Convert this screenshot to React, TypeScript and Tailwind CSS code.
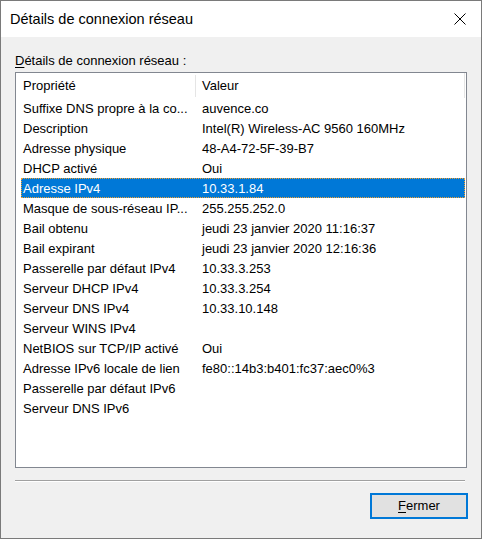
const rows: [string, string][] = [
  ["Suffixe DNS propre à la co...", "auvence.co"],
  ["Description", "Intel(R) Wireless-AC 9560 160MHz"],
  ["Adresse physique", "48-A4-72-5F-39-B7"],
  ["DHCP activé", "Oui"],
  ["Adresse IPv4", "10.33.1.84"],
  ["Masque de sous-réseau IP...", "255.255.252.0"],
  ["Bail obtenu", "jeudi 23 janvier 2020 11:16:37"],
  ["Bail expirant", "jeudi 23 janvier 2020 12:16:36"],
  ["Passerelle par défaut IPv4", "10.33.3.253"],
  ["Serveur DHCP IPv4", "10.33.3.254"],
  ["Serveur DNS IPv4", "10.33.10.148"],
  ["Serveur WINS IPv4", ""],
  ["NetBIOS sur TCP/IP activé", "Oui"],
  ["Adresse IPv6 locale de lien", "fe80::14b3:b401:fc37:aec0%3"],
  ["Passerelle par défaut IPv6", ""],
  ["Serveur DNS IPv6", ""],
];

const SELECTED = 4;

export default function App() {
  return (
    <div
      className="w-[482px] h-[539px] border border-[#7a7a7a] flex flex-col text-black"
      style={{ fontFamily: '"Liberation Sans", Arial, sans-serif' }}
    >
      {/* barre de titre */}
      <div className="h-[36px] bg-white flex items-center justify-between pl-[9px] pr-[14px]">
        <span className="text-[14.5px] leading-[22px]">Détails de connexion réseau</span>
        <svg width="12" height="12" viewBox="0 0 12 12" className="mr-[1px]">
          <path d="M0.5 0.5 L11.5 11.5 M11.5 0.5 L0.5 11.5" stroke="#000" strokeWidth="1" />
        </svg>
      </div>

      <div className="flex-1 bg-[#f0f0f0] pl-[14px] pr-[13px] flex flex-col">
        <div className="mt-[16px] h-[15px] leading-[15px] text-[13px]">
          <span className="underline underline-offset-[2px]">D</span>étails de connexion réseau :
        </div>

        {/* liste */}
        <div className="mt-[4px] h-[396px] w-[452px] border border-[#828790] bg-white flex flex-col text-[13px]">
          <div className="h-[25px] flex shrink-0">
            <div className="w-[180px] pl-[7px] leading-[26px] flex justify-between">
              <span>Propriété</span>
              <span className="w-px h-[22px] mt-[2px] bg-[#e5e5e5]" />
            </div>
            <div className="w-[269px] pl-[6px] leading-[26px] flex justify-between">
              <span>Valeur</span>
              <span className="w-px h-[25px] bg-[#e5e5e5]" />
            </div>
          </div>
          {rows.map(([k, v], i) => (
            <div
              key={k}
              className={
                i === SELECTED
                  ? "ml-[5px] w-[444px] h-[20px] flex leading-[22px] bg-[#0078d7] text-white outline-1 outline-dotted outline-[#f0a030] -outline-offset-1"
                  : "ml-[5px] w-[444px] h-[20px] flex leading-[22px]"
              }
            >
              <div className="w-[175px] h-[20px] pl-[2px] whitespace-nowrap overflow-hidden">{k}</div>
              <div className="h-[20px] pl-[6px] whitespace-nowrap">{v}</div>
            </div>
          ))}
        </div>

        {/* séparateur */}
        <div className="mt-[12px] w-[450px] h-[2px] border-t border-[#a0a0a0] border-b border-b-white" />

        <div className="mt-[11px] flex justify-end">
          <button className="w-[98px] h-[26px] border-2 border-[#0078d7] bg-[#e1e1e1] text-[13px] leading-[20px]">
            <span className="underline underline-offset-[2px]">F</span>ermer
          </button>
        </div>
      </div>
    </div>
  );
}
